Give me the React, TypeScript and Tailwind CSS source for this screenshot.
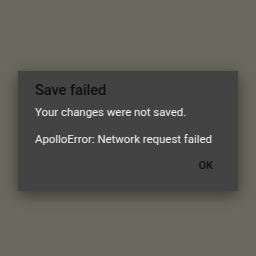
export default function App() {
  return (
    <div className="w-[256px] h-[256px] bg-[#6a695e] flex items-center justify-center pt-[6px] font-['Roboto',sans-serif]">
      <div className="w-[220px] h-[120px] bg-[#434343] shadow-[0_4px_14px_rgba(0,0,0,0.45)] pl-[17px] pr-[25px] pt-[10px] flex flex-col">
        <div className="text-[14.5px] leading-[20px] text-[#111] font-medium whitespace-nowrap">Save failed</div>
        <div className="mt-[3px] text-[11.4px] leading-[16px] text-[#eeeeee] whitespace-nowrap">Your changes were not saved.</div>
        <div className="mt-[11px] text-[11.4px] leading-[16px] text-[#eeeeee] whitespace-nowrap">ApolloError: Network request failed</div>
        <div className="mt-[12px] self-end text-[11px] leading-[14px] font-medium text-[#111]">OK</div>
      </div>
    </div>
  );
}
